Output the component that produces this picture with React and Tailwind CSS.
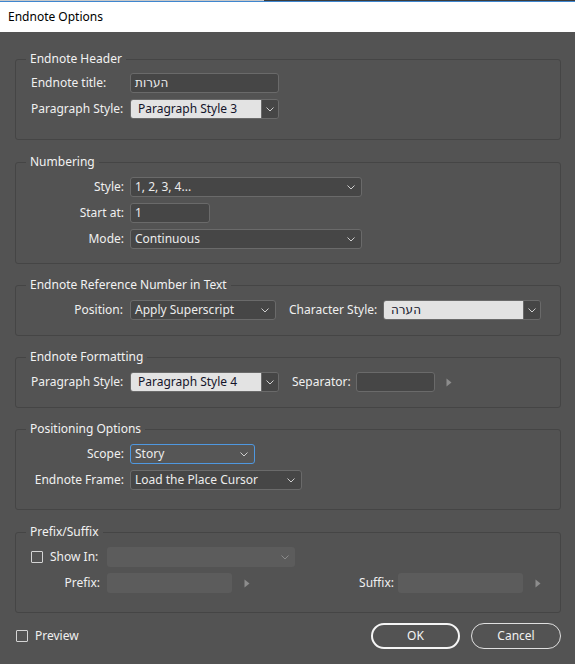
import React from "react";

const Chevron = ({ color = "#cfcfcf" }) => (
  <svg width="8" height="5" viewBox="0 0 8 5" className="shrink-0">
    <polyline points="0.5,0.5 4,4 7.5,0.5" fill="none" stroke={color} strokeWidth="1" />
  </svg>
);

const Tri = () => (
  <svg width="6" height="9" viewBox="0 0 6 9" className="shrink-0">
    <polygon points="0.5,0.5 5.5,4.5 0.5,8.5" fill="#8d8d8d" />
  </svg>
);

const DarkSelect = ({ w, value, focused }) => (
  <div
    className={`${w} h-[20px] flex items-center justify-between rounded-[3px] border pl-[4px] pr-[6px] ${
      focused ? "border-[#4f98e0] bg-[#565656]" : "border-[#6a6a6a] bg-[#464646]"
    }`}
  >
    <span className="text-[#ececec] leading-none">{value}</span>
    <Chevron />
  </div>
);

const LightSelect = ({ w, value }) => (
  <div className={`${w} h-[20px] flex rounded-[3px] border border-[#6a6a6a] overflow-hidden`}>
    <div className="flex-1 bg-[#e3e3e3] flex items-center pl-[7px] text-[#14142a] leading-none">{value}</div>
    <div className="w-[17px] bg-[#464646] border-l border-[#6a6a6a] flex items-center justify-center">
      <Chevron />
    </div>
  </div>
);

const Input = ({ w, value }) => (
  <div className={`${w} h-[20px] flex items-center rounded-[3px] border border-[#6a6a6a] bg-[#464646] pl-[4px] text-[#ececec] leading-none`}>
    {value}
  </div>
);

const Disabled = ({ w, chevron }) => (
  <div className={`${w} h-[20px] flex items-center justify-end rounded-[3px] bg-[#5c5c5c] pr-[6px]`}>
    {chevron && <Chevron color="#8a8a8a" />}
  </div>
);

const Checkbox = () => (
  <div className="w-[12px] h-[12px] border border-[#d4d4d4] rounded-[1px] shrink-0" />
);

const Group = ({ title, className, children }) => (
  <fieldset className={`ml-[15px] mr-[14px] border border-[#454545] rounded-[3px] ${className}`}>
    <legend className="ml-[10px] px-[4px] leading-[16px] text-[#f2f2f2]">{title}</legend>
    {children}
  </fieldset>
);

const Label = ({ w, children, right }) => (
  <div className={`${w} shrink-0 text-[#f0f0f0] ${right ? "text-right" : ""}`}>{children}</div>
);

export default function App() {
  return (
    <div className="w-[575px] h-[664px] bg-[#535353] font-['Noto_Sans','DejaVu_Sans',sans-serif] text-[12px] overflow-hidden flex flex-col">
      <div className="h-[1px] flex">
        <div className="w-[264px] bg-[#c9c9c9]" />
        <div className="flex-1 bg-[#3c3c3c]" />
      </div>
      <div className="h-[1px] bg-[#3f86cf]" />
      <div className="h-[30px] bg-white flex items-center pl-[8px] text-[#000] text-[12px]">Endnote Options</div>

      <div className="pt-[19px] flex flex-col">
        <Group title="Endnote Header" className="pt-[6px] pb-[20px]">
          <div className="flex flex-col gap-[6px] pl-[15px]">
            <div className="flex items-center h-[20px]">
              <Label w="w-[99px]">Endnote title:</Label>
              <Input w="w-[149px]" value="הערות" />
            </div>
            <div className="flex items-center h-[20px]">
              <Label w="w-[99px]">Paragraph Style:</Label>
              <LightSelect w="w-[149px]" value="Paragraph Style 3" />
            </div>
          </div>
        </Group>

        <Group title="Numbering" className="mt-[14px] pt-[7px] pb-[14px]">
          <div className="flex flex-col gap-[6px] pl-[15px]">
            <div className="flex items-center h-[20px] gap-[6px]">
              <Label w="w-[93px]" right>Style:</Label>
              <DarkSelect w="w-[232px]" value="1, 2, 3, 4..." />
            </div>
            <div className="flex items-center h-[20px] gap-[6px]">
              <Label w="w-[93px]" right>Start at:</Label>
              <Input w="w-[80px]" value="1" />
            </div>
            <div className="flex items-center h-[20px] gap-[6px]">
              <Label w="w-[93px]" right>Mode:</Label>
              <DarkSelect w="w-[232px]" value="Continuous" />
            </div>
          </div>
        </Group>

        <Group title="Endnote Reference Number in Text" className="mt-[13px] pt-[7px] pb-[15px]">
          <div className="flex items-center h-[20px] pl-[15px]">
            <Label w="w-[92px]" right>Position:</Label>
            <div className="ml-[7px]">
              <DarkSelect w="w-[146px]" value="Apply Superscript" />
            </div>
            <div className="ml-[13px] text-[#f0f0f0]">Character Style:</div>
            <div className="ml-auto mr-[19px]">
              <LightSelect w="w-[158px]" value="הערה" />
            </div>
          </div>
        </Group>

        <Group title="Endnote Formatting" className="mt-[13px] pt-[7px] pb-[15px]">
          <div className="flex items-center h-[20px] pl-[15px]">
            <Label w="w-[99px]">Paragraph Style:</Label>
            <LightSelect w="w-[149px]" value="Paragraph Style 4" />
            <div className="ml-[13px] text-[#f0f0f0]">Separator:</div>
            <div className="ml-[5px]">
              <Input w="w-[79px]" value="" />
            </div>
            <div className="ml-[11px]">
              <Tri />
            </div>
          </div>
        </Group>

        <Group title="Positioning Options" className="mt-[13px] pt-[7px] pb-[19px]">
          <div className="flex flex-col gap-[6px] pl-[15px]">
            <div className="flex items-center h-[20px] gap-[6px]">
              <Label w="w-[93px]" right>Scope:</Label>
              <DarkSelect w="w-[125px]" value="Story" focused />
            </div>
            <div className="flex items-center h-[20px] gap-[6px]">
              <Label w="w-[93px]" right>Endnote Frame:</Label>
              <DarkSelect w="w-[172px]" value="Load the Place Cursor" />
            </div>
          </div>
        </Group>

        <Group title="Prefix/Suffix" className="mt-[14px] pt-[7px] pb-[19px]">
          <div className="flex flex-col gap-[6px] pl-[15px]">
            <div className="flex items-center h-[20px]">
              <Checkbox />
              <div className="ml-[7px] w-[50px] shrink-0 text-[#f0f0f0]">Show In:</div>
              <div className="ml-[7px]">
                <Disabled w="w-[188px]" chevron />
              </div>
            </div>
            <div className="flex items-center h-[20px]">
              <Label w="w-[69px]" right>Prefix:</Label>
              <div className="ml-[7px]">
                <Disabled w="w-[125px]" />
              </div>
              <div className="ml-[12px]">
                <Tri />
              </div>
              <Label w="w-[144px]" right>Suffix:</Label>
              <div className="ml-[4px]">
                <Disabled w="w-[125px]" />
              </div>
              <div className="ml-[12px]">
                <Tri />
              </div>
            </div>
          </div>
        </Group>

        <div className="mt-[10px] flex items-start">
          <div className="ml-[16px] mt-[4px] flex items-center">
            <Checkbox />
            <div className="ml-[7px] text-[#f0f0f0]">Preview</div>
          </div>
          <div className="ml-auto mr-[14px] flex gap-[11px]">
            <button className="w-[89px] h-[26px] rounded-full border-2 border-[#f5f5f5] text-[#f5f5f5] text-[12px] flex items-center justify-center">OK</button>
            <button className="w-[90px] h-[26px] rounded-full border border-[#e0e0e0] text-[#f0f0f0] text-[12px] flex items-center justify-center">Cancel</button>
          </div>
        </div>
      </div>
    </div>
  );
}
